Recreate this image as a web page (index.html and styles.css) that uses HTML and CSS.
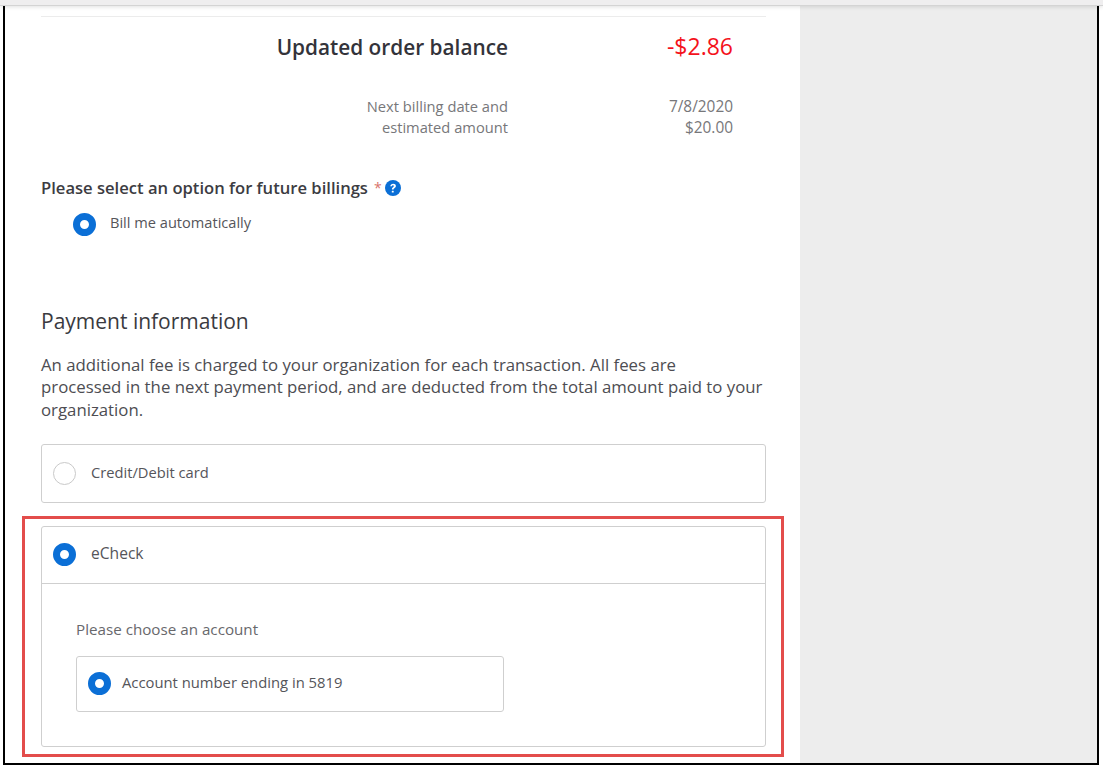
FILE: index.html
```html
<!DOCTYPE html>
<html lang="en">
<head>
<meta charset="utf-8">
<title>Payment</title>
<link rel="stylesheet" href="styles.css">
</head>
<body>
<div class="topbar"></div>
<div class="frame">
  <main class="main">
    <hr class="rule">
    <div class="summary total">
      <div class="label">Updated order balance</div>
      <div class="value">-$2.86</div>
    </div>
    <div class="summary next">
      <div class="label">Next billing date and<br>estimated amount</div>
      <div class="value">7/8/2020<br>$20.00</div>
    </div>
    <div class="question"><span>Please select an option for future billings</span><span class="req">*</span>
      <svg class="help" viewBox="0 0 16 16" width="16" height="16" aria-hidden="true"><circle cx="8" cy="8" r="8" fill="#0b6fd6"/><path d="M5.3 6.2C5.4 4.6 6.6 3.7 8.1 3.7c1.6 0 2.8.9 2.8 2.3 0 1.2-.7 1.7-1.5 2.2-.6.4-.8.6-.8 1.2v.2H6.9v-.4c0-1 .4-1.5 1.1-2 .6-.4.9-.6.9-1.1 0-.5-.4-.8-.9-.8-.6 0-1 .4-1 1H5.300Z" fill="#fff"/><rect x="6.800" y="10.700" width="1.900" height="1.900" rx=".4" fill="#fff"/></svg>
    </div>
    <div class="auto"><span class="radio on"></span><span class="lift">Bill me automatically</span></div>
    <h2 class="heading">Payment information</h2>
    <p class="intro">An additional fee is charged to your organization for each transaction. All fees are<br>processed in the next payment period, and are deducted from the total amount paid to your<br>organization.</p>
    <div class="option card-option"><span class="radio"></span><span class="lift">Credit/Debit card</span></div>
    <div class="option-wrap">
      <div class="panel">
        <div class="option-head"><span class="radio on"></span><span class="lift">eCheck</span></div>
        <div class="panel-body">
          <div class="choose">Please choose an account</div>
          <div class="account"><span class="radio on"></span><span class="lift">Account number ending in 5819</span></div>
        </div>
      </div>
      <div class="highlight"></div>
    </div>
  </main>
  <aside class="side"></aside>
</div>
</body>
</html>
```
FILE: styles.css
```css
* { box-sizing: border-box; }
html, body { margin: 0; padding: 0; background: #fff; }
body { width: 1103px; height: 769px; overflow: hidden; font-family: "Open Sans", "Lato", sans-serif; color: #4a4a4f; }
.topbar { height: 6px; background: #efeeef; border-bottom: 1px solid #d4d4d4; box-shadow: 0 1px 4px rgba(0,0,0,.12); position: relative; z-index: 2; }
.frame { display: flex; width: 1096px; height: 759px; margin-left: 3px; border: solid #000; border-width: 0 2px 2px; }
.main { width: 795px; padding: 9.500px 34px 0 36px; background: #fff; }
.side { flex: 1; background: #ededed; }
.rule { margin: 0; border: 0; border-top: 1px solid #ececec; }
.summary { display: grid; grid-template-columns: 467px 225px; }
.summary .label, .summary .value { text-align: right; }
.total { margin-top: 16px; font-size: 20.800px; line-height: 28px; font-weight: 550; color: #33333a; }
.total .value { color: #f4121c; font-weight: 400; font-size: 23px; line-height: 26px; }
.next { margin-top: 35px; font-size: 14.700px; line-height: 21px; color: #77777a; }
.next .value { font-size: 15.400px; }
.question { margin-top: 40px; font-size: 16.600px; line-height: 20px; font-weight: 600; color: #3c3c42; display: flex; align-items: center; white-space: pre; }
.req { color: #d8736c; font-weight: 400; font-size: 14px; margin-left: 6px; }
.help { flex: none; margin-left: 3px; }
.radio { flex: none; display: block; width: 23px; height: 23px; border-radius: 50%; background: #fff; border: 1px solid #c9c9c9; }
.radio.on { border: 7.500px solid #0b6fd6; }
.lift { padding-bottom: 3px; }
.auto { display: flex; align-items: center; gap: 14px; margin: 13px 0 0 32px; font-size: 14.600px; line-height: 23px; color: #55555a; }
.auto .lift { padding-bottom: 5px; }
.heading { margin: 68px 0 0; font-size: 21px; line-height: 28px; font-weight: 400; color: #3a3a40; }
.intro { margin: 19px 0 0; font-size: 16.800px; line-height: 22.700px; color: #4d4d52; white-space: nowrap; }
.option { display: flex; align-items: center; gap: 15px; height: 59px; padding-left: 11px; margin-top: 22px; border: 1px solid #cfcfcf; border-radius: 3px; font-size: 14.700px; color: #55555a; }
.option-wrap { position: relative; margin-top: 23px; }
.panel { border: 1px solid #cfcfcf; border-radius: 3px; height: 221px; }
.option-head { display: flex; align-items: center; gap: 15px; height: 57px; padding-left: 11px; border-bottom: 1px solid #cfcfcf; font-size: 15.600px; color: #55555a; }
.panel-body { padding: 35px 0 0 34px; }
.choose { font-size: 15.200px; line-height: 20px; color: #68686c; }
.account { display: flex; align-items: center; gap: 11px; width: 428px; height: 56px; margin-top: 17px; padding-left: 11px; border: 1px solid #cfcfcf; border-radius: 3px; font-size: 14.800px; color: #55555a; }
.highlight { position: absolute; left: -19px; top: -10px; width: 762px; height: 241px; border: 3px solid #e34d4b; pointer-events: none; }
```
